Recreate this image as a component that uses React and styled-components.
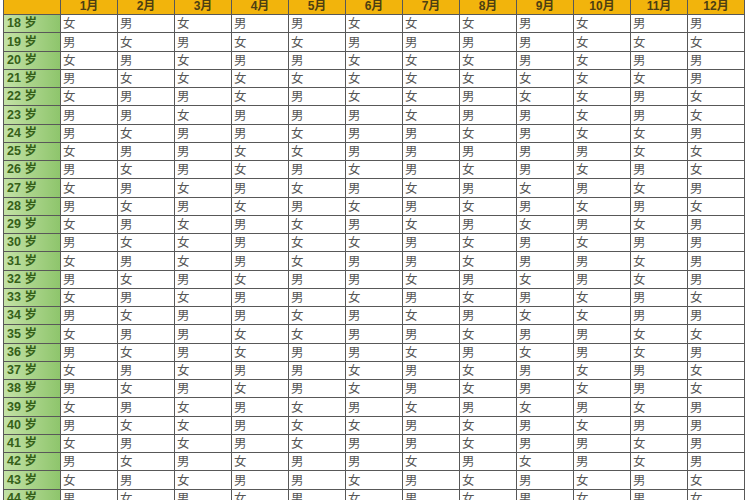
import React from "react";
import styled, { createGlobalStyle } from "styled-components";

const GlobalStyle = createGlobalStyle`
  html, body {
    margin: 0;
    padding: 0;
    background: #ffffff;
    overflow: hidden;
  }
  body {
    font-family: "Liberation Sans", "Noto Sans CJK SC", sans-serif;
  }
`;

const Page = styled.div`
  width: 750px;
  height: 500px;
  overflow: hidden;
  padding-left: 3px;
`;

const Sheet = styled.div`
  display: inline-grid;
  grid-template-columns: repeat(13, 56px);
  grid-auto-rows: 17.25px;
  gap: 1px;
  padding: 1px;
  margin-top: -6px;
  background: #585858;
`;

const HeaderCell = styled.div`
  background: #f2b40c;
  color: #4d3f12;
  font-weight: bold;
  font-size: 12px;
  display: flex;
  align-items: flex-end;
  justify-content: center;
  padding-bottom: 2px;
  line-height: 1;
`;

const AgeCell = styled.div`
  background: linear-gradient(to right, #c4e2a6, #8ec56c);
  color: #356018;
  font-weight: bold;
  font-size: 12.5px;
  display: flex;
  align-items: center;
  padding-left: 3px;
  line-height: 1;
  white-space: nowrap;
`;

const Cell = styled.div`
  background: #ffffff;
  color: #555555;
  font-family: "Noto Sans CJK SC", sans-serif;
  font-size: 12.5px;
  display: flex;
  align-items: center;
  padding-left: 2px;
  line-height: 1;
`;

const rows = [
  "女男女男男女女女男女男男",
  "男女男女女男男男男女女女",
  "女男女男男女女女男女男男",
  "男女女女女女女女女女女男",
  "女男男女男女女男女女男女",
  "男男女男男男女男男女男女",
  "男女男男女男男女男女女男",
  "女男男女女男男男男男女女",
  "男女男女男女男女男女男女",
  "女男女男女男女男女男女男",
  "男女男女男女男女男女男女",
  "女男女男女男女男女男女男",
  "男女女男女女男女男女男男",
  "女男女男女男男女男男女男",
  "男女男女男男女男女男女男",
  "女男女男男女男女男女男女",
  "男女男男女男女男女女男男",
  "女男男女女男男女男男女女",
  "男女男女男男女男女男女男",
  "女男女男男女男女男女男女",
  "男女男女男女男女男女男女",
  "女男女男女男女男女男女男",
  "男女女男女女男女男女男男",
  "女男女男女男男女男男女男",
  "男女男女男男女男女男女男",
  "女男女男男女男女男女男女",
  "男女男女男女男女男女男女",
];

const months = Array.from({ length: 12 }, (_, i) => `${i + 1}月`);

export default function App() {
  return (
    <>
      <GlobalStyle />
      <Page>
        <Sheet>
          <HeaderCell />
          {months.map((m) => (
            <HeaderCell key={m}>{m}</HeaderCell>
          ))}
          {rows.map((row, i) => (
            <React.Fragment key={i}>
              <AgeCell>{18 + i} 岁</AgeCell>
              {row.split("").map((v, j) => (
                <Cell key={j}>{v}</Cell>
              ))}
            </React.Fragment>
          ))}
        </Sheet>
      </Page>
    </>
  );
}
